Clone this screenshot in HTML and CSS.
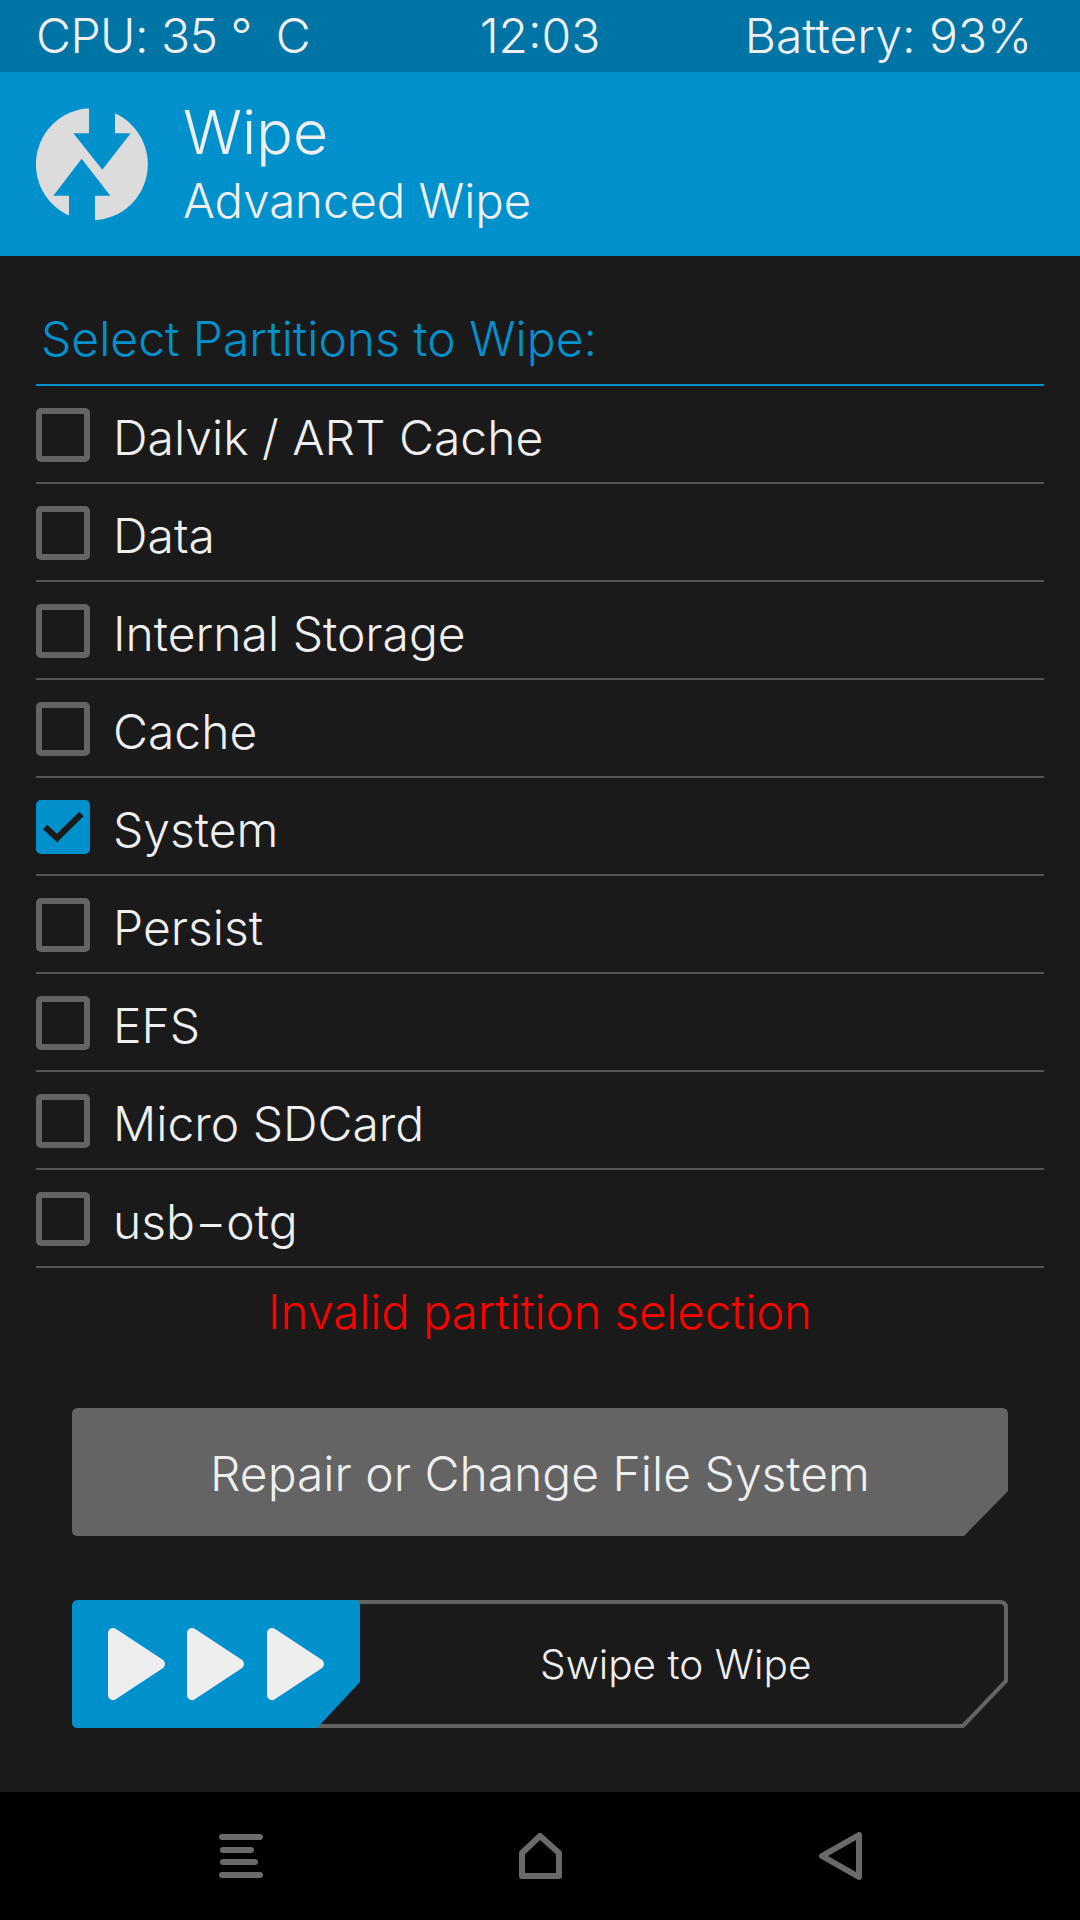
FILE: index.html
```html
<!DOCTYPE html>
<html lang="en">
<head>
<meta charset="utf-8">
<title>Wipe</title>
<link rel="stylesheet" href="styles.css">
</head>
<body>
<div class="screen">
  <div class="status">
    <span class="status-cpu">CPU: 35 °<span class="unit">C</span></span>
    <span class="status-time">12:03</span>
    <span class="status-batt">Battery: 93%</span>
  </div>
  <header class="header">
    <svg class="logo" viewBox="48 53 336 338" aria-hidden="true">
      <circle cx="215.5" cy="221.5" r="168" fill="#dcdcdc"/>
      <polygon fill="#0091cd" points="207,40 207,128 160,128 247,238 332,128 285,128 285,40"/>
      <polygon fill="#0091cd" points="147,400 147,316 100,316 185,205 271,316 225,316 225,400"/>
    </svg>
    <div class="titles">
      <div class="title">Wipe</div>
      <div class="subtitle">Advanced Wipe</div>
    </div>
  </header>
  <main class="main">
    <div class="section-title">Select Partitions to Wipe:</div>
    <ul class="list">
      <li class="row"><span class="check"></span><span class="label">Dalvik / ART Cache</span></li>
      <li class="row"><span class="check"></span><span class="label">Data</span></li>
      <li class="row"><span class="check"></span><span class="label">Internal Storage</span></li>
      <li class="row"><span class="check"></span><span class="label">Cache</span></li>
      <li class="row"><span class="check check-on"><svg class="tick" viewBox="0 0 54 54"><polyline points="9,27 21,38 45.5,14" fill="none" stroke="#1a1a1a" stroke-width="6"/></svg></span><span class="label">System</span></li>
      <li class="row"><span class="check"></span><span class="label">Persist</span></li>
      <li class="row"><span class="check"></span><span class="label">EFS</span></li>
      <li class="row"><span class="check"></span><span class="label">Micro SDCard</span></li>
      <li class="row"><span class="check"></span><span class="label">usb−otg</span></li>
    </ul>
    <div class="error">Invalid partition selection</div>
    <div class="button">
      <svg class="shape" viewBox="0 0 936 128" aria-hidden="true"><path d="M6 0H930Q936 0 936 6V83L892 128H6Q0 128 0 122V6Q0 0 6 0Z" fill="#646464"/></svg>
      <span class="button-text">Repair or Change File System</span>
    </div>
    <div class="slider">
      <svg class="shape" viewBox="0 0 936 128" aria-hidden="true"><path d="M8 2H928Q934 2 934 8V81L891 126H8Q2 126 2 120V8Q2 2 8 2Z" fill="none" stroke="#646464" stroke-width="4"/></svg>
      <div class="thumb">
        <svg class="thumb-art" viewBox="0 0 288 128" aria-hidden="true">
          <path d="M6 0H282Q288 0 288 6V82L245 128H6Q0 128 0 122V6Q0 0 6 0Z" fill="#0091cd"/>
          <polygon id="a1" points="41,33 88,64 41,95" fill="#eeeeee" stroke="#eeeeee" stroke-width="10" stroke-linejoin="round"/>
          <use href="#a1" x="79"/>
          <use href="#a1" x="159"/>
        </svg>
      </div>
      <span class="slider-text">Swipe to Wipe</span>
    </div>
  </main>
  <nav class="nav">
    <svg class="nav-icon" viewBox="219 1832 644 48" aria-hidden="true">
      <g fill="none" stroke="#6a6a6a" stroke-width="6" stroke-linecap="round" stroke-linejoin="round">
        <path d="M222 1837H260M223 1850H251M223 1862H255M222 1875H260"/>
        <path d="M540 1836L522 1853V1876H559V1853Z"/>
        <path d="M859 1835V1877L822 1856Z"/>
      </g>
    </svg>
  </nav>
</div>
</body>
</html>
```

FILE: styles.css
```css
* { box-sizing: border-box; }
html, body { margin: 0; padding: 0; }
body { width: 1080px; height: 1920px; background: #1a1a1a; font-family: Inter, Roboto, "Liberation Sans", sans-serif; font-weight: 300; color: #efefef; overflow: hidden; }
.screen { width: 1080px; height: 1920px; display: flex; flex-direction: column; }

.status { height: 72px; flex: none; background: #0074a4; padding: 0 36px; display: grid; grid-template-columns: 1fr auto 1fr; align-items: center; font-size: 48px; line-height: 72px; }
.status-cpu { letter-spacing: -0.5px; }
.unit { margin-left: 24px; }
.status-batt { text-align: right; padding-right: 12px; }

.header { height: 184px; flex: none; background: #0091cd; display: flex; padding-left: 36px; align-items: flex-start; }
.logo { width: 112px; height: 113px; flex: none; margin-top: 36px; }
.titles { margin-left: 35px; }
.title { font-size: 61px; line-height: 70px; margin-top: 25px; }
.subtitle { font-size: 47.3px; line-height: 60px; margin-top: 4px; }

.main { flex: 1; padding: 0 36px; display: flex; flex-direction: column; }
.section-title { height: 130px; flex: none; border-bottom: 2px solid #0091cd; font-size: 48px; line-height: 56px; color: #0091cd; padding: 55px 0 0 5px; }
.list { list-style: none; margin: 0; padding: 0; }
.row { height: 98px; border-bottom: 2px solid #555555; display: flex; align-items: center; }
.check { width: 54px; height: 54px; flex: none; margin-top: 2px; border: 6px solid #646464; border-radius: 5px; }
.check-on { background: #0091cd; border-color: #0091cd; position: relative; }
.tick { position: absolute; left: -6px; top: -6px; width: 54px; height: 54px; }
.label { font-size: 48px; line-height: 56px; margin: 7px 0 0 23px; }
.error { height: 140px; flex: none; font-size: 47.2px; line-height: 56px; color: #ff0000; text-align: center; padding-top: 16px; }

.button, .slider { position: relative; height: 128px; margin: 0 36px; flex: none; display: flex; align-items: center; justify-content: center; }
.shape { position: absolute; left: 0; top: 0; width: 100%; height: 100%; }
.button-text { position: relative; font-size: 48px; line-height: 56px; margin-top: 3px; }
.slider { margin-top: 64px; justify-content: flex-start; }
.thumb { position: absolute; left: 0; top: 0; width: 288px; height: 128px; }
.thumb-art { display: block; width: 288px; height: 128px; }
.slider-text { position: relative; font-size: 40.6px; line-height: 50px; margin: 2px 0 0 468px; }

.nav { height: 128px; flex: none; background: #000000; display: flex; padding: 40px 0 0 219px; }
.nav-icon { width: 644px; height: 48px; }
```
